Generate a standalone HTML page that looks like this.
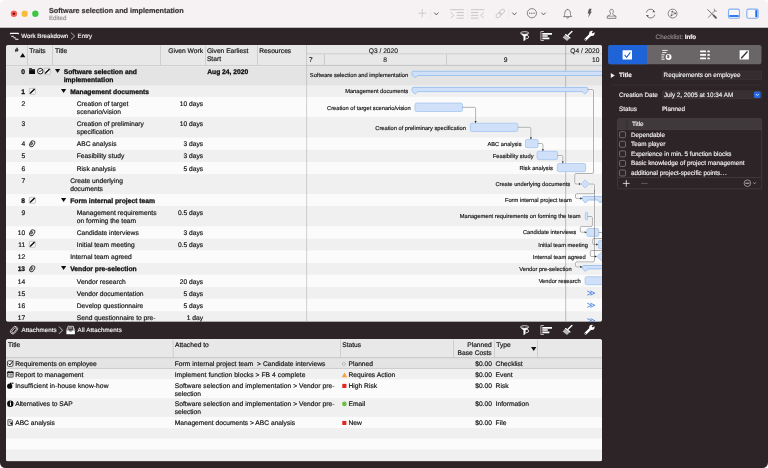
<!DOCTYPE html>
<html lang="en"><head><meta charset="utf-8"><title>Software selection and implementation</title>
<style>
html,body{margin:0;padding:0;background:#fff;}
body{width:768px;height:468px;overflow:hidden;position:relative;font-family:"Liberation Sans",sans-serif;}
#win{position:absolute;left:0;top:0;width:768px;height:468px;border-radius:5.5px;overflow:hidden;background:linear-gradient(#f6f1f3 0,#f6f1f3 27px,#2d2427 27px);will-change:transform;}
#win div{position:absolute;box-sizing:border-box;}
#win svg{position:absolute;overflow:visible;}
.t{font-size:6.68px;line-height:8px;color:#141414;white-space:nowrap;-webkit-text-stroke:0.18px;text-rendering:geometricPrecision;}
.b{font-weight:bold;font-size:6.72px;-webkit-text-stroke:0.26px;color:#0c0c0c;}
</style></head><body><div id="win">

<svg style="left:0;top:0" width="768" height="29" viewBox="0 0 768 29"><rect x="0" y="0" width="768" height="27.7" fill="#f6f1f3"/><rect x="0" y="26.5" width="768" height="1.3" fill="#fdfbfc"/><rect x="0" y="27.75" width="768" height="1.3" fill="#2d2427"/><circle cx="13.9" cy="13.8" r="3.75" fill="#fcfaff"/><circle cx="24.65" cy="13.8" r="3.75" fill="#fcfaff"/><circle cx="35.35" cy="13.8" r="3.75" fill="#fcfaff"/><circle cx="13.9" cy="13.8" r="3.2" fill="#f6605a"/><circle cx="24.65" cy="13.8" r="3.2" fill="#f7bc3a"/><circle cx="35.35" cy="13.8" r="3.2" fill="#3cc644"/><rect x="12.95" y="12.85" width="1.9" height="1.9" rx="0.4" fill="#5e0705"/></svg>
<div class="t" style="left:48.9px;top:6.1px;font-size:7.27px;line-height:9px;font-weight:bold;color:#383435;-webkit-text-stroke:0.2px;">Software selection and implementation</div>
<div class="t" style="left:48.9px;top:15.1px;font-size:6.2px;line-height:8px;color:#9a9597;-webkit-text-stroke:0.2px;">Edited</div>
<svg style="left:0;top:0" width="768" height="28" viewBox="0 0 768 28"><path d="M418.2 13.2H426.3M422.25 9.1V17.3" stroke="#cac5c7" stroke-width="0.85" fill="none"/><path d="M430.6 9V18.2M467.8 9V18.2M508.8 9V18.2" stroke="#e9e4e6" stroke-width="0.6"/><path d="M434.45 12.9L436.3 14.9L438.15 12.9" fill="none" stroke="#5d585a" stroke-width="0.95" stroke-linecap="round" stroke-linejoin="round"/><path d="M450 9.7H463.8M456.6 12.5H463.8M456.6 15.3H463.8M456.6 18.1H463.8" stroke="#cac5c7" stroke-width="1" fill="none"/><path d="M450.7 12.4L453.8 15.3L450.7 18.2" stroke="#cac5c7" stroke-width="1" fill="none"/><path d="M470.9 9.7H484.4M470.9 12.5H478.4M470.9 15.3H478.4M470.9 18.1H478.4" stroke="#cac5c7" stroke-width="1" fill="none"/><path d="M483.9 12.4L480.8 15.3L483.9 18.2" stroke="#cac5c7" stroke-width="1" fill="none"/><g transform="translate(500.3 13.5) rotate(-45)" stroke="#cac5c7" stroke-width="0.95" fill="none"><rect x="-5.3" y="-1.75" width="6" height="3.5" rx="1.75"/><rect x="-0.7" y="-1.75" width="6" height="3.5" rx="1.75"/></g><path d="M512.55 12.9L514.4 14.9L516.25 12.9" fill="none" stroke="#5d585a" stroke-width="0.95" stroke-linecap="round" stroke-linejoin="round"/><circle cx="531.9" cy="13.2" r="4.6" stroke="#5d585a" stroke-width="0.7" fill="none"/><g fill="#5d585a"><circle cx="529.7" cy="13.2" r="0.65"/><circle cx="531.9" cy="13.2" r="0.65"/><circle cx="534.1" cy="13.2" r="0.65"/></g><path d="M541.65 12.9L543.5 14.9L545.35 12.9" fill="none" stroke="#5d585a" stroke-width="0.95" stroke-linecap="round" stroke-linejoin="round"/><path d="M563.6 16.6C565 15.6 564.6 13.6 564.9 12.2C565.2 10.6 566.2 9.6 567.6 9.6C569 9.6 570 10.6 570.3 12.2C570.6 13.6 570.2 15.6 571.6 16.6Z" stroke="#5d585a" stroke-width="0.75" fill="none" stroke-linejoin="round"/><path d="M566.6 17.2A1 1 0 0 0 568.6 17.2" stroke="#5d585a" stroke-width="0.75" fill="none"/><path d="M567.6 9.6V8.9" stroke="#5d585a" stroke-width="0.75"/><path d="M589 8.8L591.7 8.8L590.5 11.6L591.8 11.6L588.1 17.7L589.2 13.5L587.6 13.5Z" fill="#5d585a"/><path d="M607.3 18.35V16.4C607.3 15.5 609.6 15.7 610.2 14.6C610.7 13.7 610.5 13.3 610.1 12.5C609.4 10.9 610.1 9.3 611.6 9.3C613.1 9.3 613.8 10.9 613.1 12.5C612.7 13.3 612.5 13.7 613 14.6C613.6 15.7 615.9 15.5 615.9 16.4V18.35Z" stroke="#5d585a" stroke-width="0.72" fill="none" stroke-linejoin="round"/><path d="M607.5 16.2H615.7" stroke="#5d585a" stroke-width="0.55"/><path d="M646.35 12.6A4.35 4.35 0 0 1 654.2 11.1" stroke="#5d585a" stroke-width="0.75" fill="none"/><path d="M654.85 14.6A4.35 4.35 0 0 1 647 16.1" stroke="#5d585a" stroke-width="0.75" fill="none"/><path d="M653.2 10L655.4 12.2L652.6 12.3ZM648 17.2L645.8 15L648.6 14.9Z" fill="#5d585a"/><circle cx="672.6" cy="13.6" r="4.45" stroke="#5d585a" stroke-width="0.7" fill="none"/><path d="M672.3 11.5L675.3 13.3L671.4 15.5Z" stroke="#5d585a" stroke-width="0.5" fill="none"/><g fill="#5d585a"><circle cx="672.3" cy="11.5" r="0.85"/><circle cx="675.3" cy="13.3" r="0.85"/><circle cx="671.4" cy="15.5" r="0.85"/></g><path d="M707.7 9.7L713.6 15.4" stroke="#5d585a" stroke-width="0.85" fill="none" stroke-linecap="round"/><path d="M713.6 15.4L716 17.8" stroke="#5d585a" stroke-width="1.9" stroke-linecap="round"/><path d="M714.9 10.6L708.3 17.5" stroke="#8a8587" stroke-width="1" fill="none" stroke-linecap="round"/><path d="M714.3 9.1L714.6 10.9L716.4 11.2" stroke="#8a8587" stroke-width="0.9" fill="none" stroke-linecap="round" stroke-linejoin="round"/><rect x="728.5" y="9.1" width="11" height="9.1" rx="1.8" stroke="#82b0f7" stroke-width="1.15" fill="#faf7f8"/><rect x="729.3" y="15.1" width="9.4" height="1.8" fill="#1b6cf1"/><rect x="746.8" y="9.1" width="11.3" height="9.1" rx="1.8" stroke="#82b0f7" stroke-width="1.15" fill="#faf7f8"/><rect x="755.3" y="10.1" width="1.9" height="7.1" fill="#1b6cf1"/><path d="M743 9.3V18" stroke="#ebe6e8" stroke-width="0.6"/></svg>
<svg style="left:0;top:28px" width="100" height="17" viewBox="0 28 100 17"><path d="M10.5 33.3H18.3" stroke="#fff" stroke-width="1.15" stroke-linecap="round"/><path d="M10.3 33.4V34.5M18.5 33.4V34.5" stroke="#fff" stroke-width="0.6"/><path d="M11.7 36.3H13.3M13.8 37.8H15.2M15.7 39.2H18" stroke="#fff" stroke-width="1.05" stroke-linecap="round"/><path d="M13.3 36.6L14.2 37.5M15.2 38.1L16 38.9" stroke="#d8d5d6" stroke-width="0.5" fill="none"/><path d="M70.9 32.6L74.7 36.1L70.9 39.6" stroke="#d5d2d3" stroke-width="0.75" fill="none"/></svg><div class="t" style="left:21.3px;top:33.1px;font-size:6.2px;line-height:8px;color:#f4f2f3;-webkit-text-stroke:0.15px;">Work Breakdown</div><div class="t" style="left:77.6px;top:33.1px;font-size:6.2px;line-height:8px;color:#f4f2f3;-webkit-text-stroke:0.15px;">Entry</div>
<svg style="left:515px;top:28px" width="85" height="16" viewBox="515 28 85 16"><ellipse cx="524.6" cy="33.05" rx="4.1" ry="1.4" fill="none" stroke="#fff" stroke-width="0.75"/><path d="M521.2 33.8L523.7 36.5V40.7L525.3 40V36.5L528 33.8Q524.6 35 521.2 33.8Z" fill="#fff" stroke="#fff" stroke-width="0.4" stroke-linejoin="round"/><path d="M525.6 35.4H527A1.6 1.6 0 0 1 527 38.6H525.8" fill="none" stroke="#fff" stroke-width="0.75"/><path d="M543.9 31.5H540.9V40.5H543.9" fill="none" stroke="#e9e6e7" stroke-width="0.75"/><path d="M542.3 33.8H552M542.3 36H547.7M542.3 38.45H549.4" stroke="#fff" stroke-width="1.7"/><path d="M564.9 35.1L569.4 38.6L567.1 40.9L562.6 37.4Z" fill="#bdb9ba"/><path d="M571.9 31.4L568 35.3" stroke="#fff" stroke-width="1.35" stroke-linecap="round"/><path d="M565.6 34.6L569.9 37.9" stroke="#fff" stroke-width="1.3" stroke-linecap="round"/><path d="M585.7 39.4L590.8 34.3" stroke="#fff" stroke-width="2.5" stroke-linecap="round"/><circle cx="591.9" cy="33.3" r="2.65" fill="#fff"/><path d="M592.2 33L595.4 29.8" stroke="#2d2427" stroke-width="1.7"/><circle cx="585.6" cy="39.5" r="0.55" fill="#2d2427"/></svg>
<div style="left:6px;top:44px;width:596px;height:278px;overflow:hidden;">
<svg style="left:0;top:0" width="596" height="278" viewBox="6 44 596 278"><defs><clipPath id="ct"><rect x="6" y="44.9" width="596" height="276.7" rx="2.6"/></clipPath></defs><g clip-path="url(#ct)"><rect x="6" y="44.9" width="596" height="276.7" fill="#fbfbfb"/><rect x="6" y="65.8" width="596" height="19.95" fill="#e4e4e4"/><rect x="6" y="85.7" width="596" height="11.25" fill="#f0f0f0"/><rect x="6" y="96.9" width="596" height="20.25" fill="#fbfbfb"/><rect x="6" y="117.1" width="596" height="20.7" fill="#f0f0f0"/><rect x="6" y="137.75" width="596" height="12.1" fill="#fbfbfb"/><rect x="6" y="149.8" width="596" height="12.25" fill="#f0f0f0"/><rect x="6" y="162" width="596" height="12.05" fill="#fbfbfb"/><rect x="6" y="174" width="596" height="20.05" fill="#f0f0f0"/><rect x="6" y="194" width="596" height="12.05" fill="#fbfbfb"/><rect x="6" y="206" width="596" height="20.55" fill="#f0f0f0"/><rect x="6" y="226.5" width="596" height="12.25" fill="#fbfbfb"/><rect x="6" y="238.7" width="596" height="11.95" fill="#f0f0f0"/><rect x="6" y="250.6" width="596" height="12.45" fill="#fbfbfb"/><rect x="6" y="263" width="596" height="11.85" fill="#f0f0f0"/><rect x="6" y="274.8" width="596" height="12.15" fill="#fbfbfb"/><rect x="6" y="286.9" width="596" height="11.95" fill="#f0f0f0"/><rect x="6" y="298.8" width="596" height="12.45" fill="#fbfbfb"/><rect x="6" y="311.2" width="596" height="20.45" fill="#f0f0f0"/><rect x="6" y="44.9" width="596" height="20.1" fill="#e8e8e8"/><rect x="6" y="65" width="596" height="0.8" fill="#bcbcbc"/><rect x="6" y="65.8" width="300.6" height="0.8" fill="#ededed"/><rect x="26.95" y="45.5" width="0.7" height="19.5" fill="#c4c4c4"/><rect x="52.05" y="45.5" width="0.7" height="19.5" fill="#c4c4c4"/><rect x="160.05" y="45.5" width="0.7" height="19.5" fill="#c4c4c4"/><rect x="205.05" y="45.5" width="0.7" height="19.5" fill="#c4c4c4"/><rect x="257.15" y="45.5" width="0.7" height="19.5" fill="#c4c4c4"/></g></svg>
<div class="t b" style="right:576.9px;top:25.1px;text-align:right;">0</div>
<div class="t b" style="left:57.7px;top:25.1px;">Software selection and<br>implementation</div>
<svg style="left:48.85px;top:25.25px" width="5.2" height="4" viewBox="0 0 5.2 4"><path d="M0 0H5.2L2.6 4Z" fill="#0c0c0c"/></svg>
<div class="t b" style="left:201.2px;top:25.1px;">Aug 24, 2020</div>
<svg style="left:23.1px;top:23.7px" width="6.6" height="6.6" viewBox="0 0 6.6 6.6"><path d="M0.1 0.3H2.7L3.3 1H6V6H0.1Z" fill="#0c0c0c"/><path d="M0.1 1.75H6" stroke="#d9d9d9" stroke-width="0.3"/></svg>
<svg style="left:30.7px;top:23.7px" width="6.6" height="6.6" viewBox="0 0 6.6 6.6"><circle cx="3.3" cy="3.2" r="2.75" fill="#fafafa" stroke="#141414" stroke-width="1"/><path d="M3.2 3.4L4.8 2.2M3.2 3.4H2.2" stroke="#141414" stroke-width="0.95" fill="none"/></svg>
<svg style="left:38.3px;top:23.7px" width="6.8" height="6.6" viewBox="0 0 6.8 6.6"><rect x="0.35" y="0.35" width="6" height="5.9" rx="0.6" fill="#fafafa" stroke="#a3a3a3" stroke-width="0.6"/><path d="M1.5 5.1L5.6 0.9" stroke="#0c0c0c" stroke-width="1.45" stroke-linecap="butt"/><path d="M0.7 5.9L1 4.5L2.1 5.6Z" fill="#0c0c0c"/></svg>
<div class="t b" style="right:576.9px;top:45.1px;text-align:right;">1</div>
<div class="t b" style="left:64.2px;top:45.1px;">Management documents</div>
<svg style="left:55.35px;top:45.25px" width="5.2" height="4" viewBox="0 0 5.2 4"><path d="M0 0H5.2L2.6 4Z" fill="#0c0c0c"/></svg>
<svg style="left:23.1px;top:43.7px" width="6.8" height="6.6" viewBox="0 0 6.8 6.6"><rect x="0.35" y="0.35" width="6" height="5.9" rx="0.6" fill="#fafafa" stroke="#a3a3a3" stroke-width="0.6"/><path d="M1.5 5.1L5.6 0.9" stroke="#0c0c0c" stroke-width="1.45" stroke-linecap="butt"/><path d="M0.7 5.9L1 4.5L2.1 5.6Z" fill="#0c0c0c"/></svg>
<div class="t" style="right:576.9px;top:57.1px;text-align:right;">2</div>
<div class="t" style="left:70.8px;top:57.1px;">Creation of target<br>scenario/vision</div>
<div class="t" style="right:398.9px;top:57.1px;text-align:right;">10 days</div>
<div class="t" style="right:576.9px;top:77.1px;text-align:right;">3</div>
<div class="t" style="left:70.8px;top:77.1px;">Creation of preliminary<br>specification</div>
<div class="t" style="right:398.9px;top:77.1px;text-align:right;">10 days</div>
<div class="t" style="right:576.9px;top:97.1px;text-align:right;">4</div>
<div class="t" style="left:70.8px;top:97.1px;">ABC analysis</div>
<div class="t" style="right:398.9px;top:97.1px;text-align:right;">3 days</div>
<svg style="left:23.1px;top:95.7px" width="6.8" height="7.2" viewBox="0 0 6.8 7.2"><g transform="translate(3.2 3.7) rotate(35)" fill="none" stroke="#4a4a4a" stroke-width="1"><rect x="-2" y="-3.1" width="4" height="6.2" rx="2"/><path d="M0.2 -1.2V1.2A0.9 0.9 0 0 1 -1.1 1.2V-1.6"/></g></svg>
<div class="t" style="right:576.9px;top:109.1px;text-align:right;">5</div>
<div class="t" style="left:70.8px;top:109.1px;">Feasibility study</div>
<div class="t" style="right:398.9px;top:109.1px;text-align:right;">3 days</div>
<div class="t" style="right:576.9px;top:122.1px;text-align:right;">6</div>
<div class="t" style="left:70.8px;top:122.1px;">Risk analysis</div>
<div class="t" style="right:398.9px;top:122.1px;text-align:right;">5 days</div>
<div class="t" style="right:576.9px;top:134.1px;text-align:right;">7</div>
<div class="t" style="left:64.2px;top:134.1px;">Create underlying<br>documents</div>
<div class="t b" style="right:576.9px;top:154.1px;text-align:right;">8</div>
<div class="t b" style="left:64.2px;top:154.1px;">Form internal project team</div>
<svg style="left:55.35px;top:154.25px" width="5.2" height="4" viewBox="0 0 5.2 4"><path d="M0 0H5.2L2.6 4Z" fill="#0c0c0c"/></svg>
<svg style="left:23.1px;top:152.7px" width="6.8" height="6.6" viewBox="0 0 6.8 6.6"><rect x="0.35" y="0.35" width="6" height="5.9" rx="0.6" fill="#fafafa" stroke="#a3a3a3" stroke-width="0.6"/><path d="M1.5 5.1L5.6 0.9" stroke="#0c0c0c" stroke-width="1.45" stroke-linecap="butt"/><path d="M0.7 5.9L1 4.5L2.1 5.6Z" fill="#0c0c0c"/></svg>
<div class="t" style="right:576.9px;top:166.1px;text-align:right;">9</div>
<div class="t" style="left:70.8px;top:166.1px;">Management requirements<br>on forming the team</div>
<div class="t" style="right:398.9px;top:166.1px;text-align:right;">0.5 days</div>
<div class="t" style="right:576.9px;top:186.1px;text-align:right;">10</div>
<div class="t" style="left:70.8px;top:186.1px;">Candidate interviews</div>
<div class="t" style="right:398.9px;top:186.1px;text-align:right;">3 days</div>
<svg style="left:23.1px;top:184.7px" width="6.8" height="7.2" viewBox="0 0 6.8 7.2"><g transform="translate(3.2 3.7) rotate(35)" fill="none" stroke="#4a4a4a" stroke-width="1"><rect x="-2" y="-3.1" width="4" height="6.2" rx="2"/><path d="M0.2 -1.2V1.2A0.9 0.9 0 0 1 -1.1 1.2V-1.6"/></g></svg>
<div class="t" style="right:576.9px;top:198.1px;text-align:right;">11</div>
<div class="t" style="left:70.8px;top:198.1px;">Initial team meeting</div>
<div class="t" style="right:398.9px;top:198.1px;text-align:right;">0.5 days</div>
<svg style="left:23.1px;top:196.7px" width="6.8" height="6.6" viewBox="0 0 6.8 6.6"><rect x="0.35" y="0.35" width="6" height="5.9" rx="0.6" fill="#fafafa" stroke="#a3a3a3" stroke-width="0.6"/><path d="M1.5 5.1L5.6 0.9" stroke="#0c0c0c" stroke-width="1.45" stroke-linecap="butt"/><path d="M0.7 5.9L1 4.5L2.1 5.6Z" fill="#0c0c0c"/></svg>
<div class="t" style="right:576.9px;top:210.1px;text-align:right;">12</div>
<div class="t" style="left:64.2px;top:210.1px;">Internal team agreed</div>
<div class="t b" style="right:576.9px;top:222.1px;text-align:right;">13</div>
<div class="t b" style="left:64.2px;top:222.1px;">Vendor pre-selection</div>
<svg style="left:55.35px;top:222.25px" width="5.2" height="4" viewBox="0 0 5.2 4"><path d="M0 0H5.2L2.6 4Z" fill="#0c0c0c"/></svg>
<svg style="left:23.1px;top:220.7px" width="6.8" height="7.2" viewBox="0 0 6.8 7.2"><g transform="translate(3.2 3.7) rotate(35)" fill="none" stroke="#4a4a4a" stroke-width="1"><rect x="-2" y="-3.1" width="4" height="6.2" rx="2"/><path d="M0.2 -1.2V1.2A0.9 0.9 0 0 1 -1.1 1.2V-1.6"/></g></svg>
<div class="t" style="right:576.9px;top:235.1px;text-align:right;">14</div>
<div class="t" style="left:70.8px;top:235.1px;">Vendor research</div>
<div class="t" style="right:398.9px;top:235.1px;text-align:right;">20 days</div>
<div class="t" style="right:576.9px;top:247.1px;text-align:right;">15</div>
<div class="t" style="left:70.8px;top:247.1px;">Vendor documentation</div>
<div class="t" style="right:398.9px;top:247.1px;text-align:right;">5 days</div>
<div class="t" style="right:576.9px;top:259.1px;text-align:right;">16</div>
<div class="t" style="left:70.8px;top:259.1px;">Develop questionnaire</div>
<div class="t" style="right:398.9px;top:259.1px;text-align:right;">5 days</div>
<div class="t" style="right:576.9px;top:271.1px;text-align:right;">17</div>
<div class="t" style="left:70.8px;top:271.1px;">Send questionnaire to pre-<br>selected vendors</div>
<div class="t" style="right:398.9px;top:271.1px;text-align:right;">1 day</div>
<div class="t" style="left:8.9px;top:3.1px;font-size:6px;font-weight:bold;">#</div>
<svg style="left:13.9px;top:9.2px" width="5.4" height="4.3" viewBox="0 0 5.4 4.3"><path d="M0 4.3H5.4L2.7 0Z" fill="#0c0c0c"/></svg>
<div class="t" style="left:23.2px;top:4.1px;">Traits</div>
<div class="t" style="left:48.9px;top:4.1px;">Title</div>
<div class="t" style="right:399px;top:4.1px;text-align:right;">Given Work</div>
<div class="t" style="left:200.9px;top:4.1px;">Given Earliest<br>Start</div>
<div class="t" style="left:253.3px;top:4.1px;">Resources</div>
<svg style="left:0;top:0" width="596" height="278" viewBox="6 44 596 278" font-family="Liberation Sans, sans-serif" text-rendering="geometricPrecision"><g clip-path="url(#ct)"><rect x="306.6" y="44.9" width="295.4" height="20.9" fill="#e8e8e8"/><path d="M306.6 53.8H602" stroke="#c4c4c4" stroke-width="0.7"/><path d="M306.6 65.4H602" stroke="#bdbdbd" stroke-width="0.8"/><path d="M324.4 54.2V65M446.5 54.2V65" stroke="#bdbdbd" stroke-width="0.7"/><path d="M306.6 44.9V321.6" stroke="#bcbcbc" stroke-width="0.7"/><path d="M565.7 44.9V321.6" stroke="#9c9c9c" stroke-width="0.65"/><g font-size="6.68" fill="#141414" stroke="#141414" stroke-width="0.12"><text x="368.7" y="52.87">Q3 / 2020</text><text x="599.5" y="52.87" text-anchor="end">Q4 / 2020</text><text x="309" y="62.37">7</text><text x="385.2" y="62.37" text-anchor="middle">8</text><text x="505.6" y="62.37" text-anchor="middle">9</text><text x="599.5" y="62.37" text-anchor="end">10</text></g><g font-size="5.72" fill="#141414" stroke="#141414" stroke-width="0.16" text-anchor="end"><text x="408.1" y="77.05">Software selection and implementation</text><text x="408.1" y="93.05">Management documents</text><text x="410.7" y="109.85">Creation of target scenario/vision</text><text x="465.9" y="129.55">Creation of preliminary specification</text><text x="521.5" y="145.75">ABC analysis</text><text x="533.5" y="157.65">Feasibility study</text><text x="552.8" y="169.75">Risk analysis</text><text x="570.1" y="186.05">Create underlying documents</text><text x="571.7" y="202.05">Form internal project team</text><text x="580.6" y="218.35">Management requirements on forming the team</text><text x="576" y="234.35">Candidate interviews</text><text x="587.9" y="246.65">Initial team meeting</text><text x="585.6" y="258.85">Internal team agreed</text><text x="571.7" y="271.25">Vendor pre-selection</text><text x="580.6" y="283.05">Vendor research</text></g><path d="M462.5 107.3L474.3 107.3Q475.6 107.3 475.6 108.6L475.6 121.2" fill="none" stroke="#fff" stroke-opacity="0.85" stroke-width="1.7"/><path d="M517.9 127.3L529.6 127.3Q530.9 127.3 530.9 128.6L530.9 137.4" fill="none" stroke="#fff" stroke-opacity="0.85" stroke-width="1.7"/><path d="M538.1 143.5L541.6 143.5Q542.9 143.5 542.9 144.8L542.9 149.3" fill="none" stroke="#fff" stroke-opacity="0.85" stroke-width="1.7"/><path d="M557.5 155.5L561.5 155.5Q562.8 155.5 562.8 156.8L562.8 161.5" fill="none" stroke="#fff" stroke-opacity="0.85" stroke-width="1.7"/><path d="M587.8 89.5L592.2 89.5Q593.5 89.5 593.5 90.8L593.5 172.2Q593.5 173.5 592.2 173.5L576.1 173.5Q574.8 173.5 574.8 174.8L574.8 182.7Q574.8 184 576.1 184L579 184" fill="none" stroke="#fff" stroke-opacity="0.85" stroke-width="1.7"/><path d="M589.2 184L593.2 184Q594.5 184 594.5 185.3L594.5 192.4Q594.5 193.7 593.2 193.7L576.8 193.7Q575.5 193.7 575.5 195L575.5 197.1Q575.5 198.4 576.8 198.4L580.3 198.4" fill="none" stroke="#fff" stroke-opacity="0.85" stroke-width="1.7"/><path d="M594.5 190L594.5 260.6Q594.5 261.9 593.2 261.9L576.8 261.9Q575.5 261.9 575.5 263.2L575.5 265.6Q575.5 266.9 576.8 266.9L580.3 266.9" fill="none" stroke="#fff" stroke-opacity="0.85" stroke-width="1.7"/><path d="M587.7 216.5L591.1 216.5Q592.4 216.5 592.4 217.8L592.4 225.1Q592.4 226.4 591.1 226.4L581.6 226.4Q580.3 226.4 580.3 227.7L580.3 230.9Q580.3 232.2 581.6 232.2L584.8 232.2" fill="none" stroke="#fff" stroke-opacity="0.85" stroke-width="1.7"/><path d="M598.8 232.5L602.7 232.5Q604 232.5 604 233.8L604 237.2Q604 238.5 602.7 238.5L594 238.5Q592.7 238.5 592.7 239.8L592.7 243.2Q592.7 244.5 594 244.5L596.2 244.5" fill="none" stroke="#fff" stroke-opacity="0.85" stroke-width="1.7"/><path d="M603 244.5L604.7 244.5Q606 244.5 606 245.8L606 249.2Q606 250.5 604.7 250.5L591.6 250.5Q590.3 250.5 590.3 251.8L590.3 255.2Q590.3 256.5 591.6 256.5L595 256.5" fill="none" stroke="#fff" stroke-opacity="0.85" stroke-width="1.7"/><path d="M413.3 71.3H608.8Q610 71.3 610 72.5V75.5H417.7L415.1 77.6L412.1 75.2V72.5Q412.1 71.3 413.3 71.3Z" fill="#cfe0f8" stroke="#94bdef" stroke-width="0.85" stroke-linejoin="round"/><path d="M413.3 87.4H586.6Q587.8 87.4 587.8 88.6V91.3L584.8 94L582.2 91.6H417.7L415.1 94L412.1 91.3V88.6Q412.1 87.4 413.3 87.4Z" fill="#cfe0f8" stroke="#94bdef" stroke-width="0.85" stroke-linejoin="round"/><path d="M583.6 196.4H602Q603.2 196.4 603.2 197.6V199.7L600.2 203L597.6 200H588L585.4 203L582.4 199.7V197.6Q582.4 196.4 583.6 196.4Z" fill="#cfe0f8" stroke="#94bdef" stroke-width="0.85" stroke-linejoin="round"/><path d="M583.6 265.5H618.8Q620 265.5 620 266.7V268.9H588L585.4 271.5L582.4 268.6V266.7Q582.4 265.5 583.6 265.5Z" fill="#cfe0f8" stroke="#94bdef" stroke-width="0.85" stroke-linejoin="round"/><rect x="415" y="103.1" width="47.5" height="8.4" rx="1.6" fill="#cfe0f8" stroke="#9cc2ef" stroke-width="0.7"/><rect x="470.4" y="123.2" width="47.5" height="8.3" rx="1.6" fill="#cfe0f8" stroke="#9cc2ef" stroke-width="0.7"/><rect x="525.4" y="139.4" width="12.7" height="8.3" rx="1.6" fill="#cfe0f8" stroke="#9cc2ef" stroke-width="0.7"/><rect x="537.1" y="151.3" width="20.4" height="8.3" rx="1.6" fill="#cfe0f8" stroke="#9cc2ef" stroke-width="0.7"/><rect x="557.3" y="163.5" width="28.3" height="8.2" rx="1.6" fill="#cfe0f8" stroke="#9cc2ef" stroke-width="0.7"/><rect x="585.3" y="212.1" width="2.4" height="7.9" rx="1.6" fill="#cfe0f8" stroke="#9cc2ef" stroke-width="0.7"/><rect x="586.9" y="228.5" width="11.9" height="7.9" rx="1.6" fill="#cfe0f8" stroke="#9cc2ef" stroke-width="0.7"/><rect x="598.3" y="240.7" width="7.7" height="7.8" rx="1.6" fill="#cfe0f8" stroke="#9cc2ef" stroke-width="0.7"/><rect x="585.1" y="276.7" width="34.9" height="8" rx="1.6" fill="#cfe0f8" stroke="#9cc2ef" stroke-width="0.7"/><path d="M462.5 107.3L474.3 107.3Q475.6 107.3 475.6 108.6L475.6 121.2" fill="none" stroke="#585858" stroke-width="0.48"/><path d="M474.55 121.1H476.65L475.6 123.2Z" fill="#222"/><path d="M517.9 127.3L529.6 127.3Q530.9 127.3 530.9 128.6L530.9 137.4" fill="none" stroke="#585858" stroke-width="0.48"/><path d="M529.85 137.3H531.95L530.9 139.4Z" fill="#222"/><path d="M538.1 143.5L541.6 143.5Q542.9 143.5 542.9 144.8L542.9 149.3" fill="none" stroke="#585858" stroke-width="0.48"/><path d="M541.85 149.2H543.95L542.9 151.3Z" fill="#222"/><path d="M557.5 155.5L561.5 155.5Q562.8 155.5 562.8 156.8L562.8 161.5" fill="none" stroke="#585858" stroke-width="0.48"/><path d="M561.75 161.4H563.85L562.8 163.5Z" fill="#222"/><path d="M587.8 89.5L592.2 89.5Q593.5 89.5 593.5 90.8L593.5 172.2Q593.5 173.5 592.2 173.5L576.1 173.5Q574.8 173.5 574.8 174.8L574.8 182.7Q574.8 184 576.1 184L579 184" fill="none" stroke="#585858" stroke-width="0.48"/><path d="M578.9 182.95V185.05L581 184Z" fill="#222"/><path d="M589.2 184L593.2 184Q594.5 184 594.5 185.3L594.5 192.4Q594.5 193.7 593.2 193.7L576.8 193.7Q575.5 193.7 575.5 195L575.5 197.1Q575.5 198.4 576.8 198.4L580.3 198.4" fill="none" stroke="#585858" stroke-width="0.48"/><path d="M580.2 197.35V199.45L582.3 198.4Z" fill="#222"/><path d="M594.5 190L594.5 260.6Q594.5 261.9 593.2 261.9L576.8 261.9Q575.5 261.9 575.5 263.2L575.5 265.6Q575.5 266.9 576.8 266.9L580.3 266.9" fill="none" stroke="#585858" stroke-width="0.48"/><path d="M580.2 265.85V267.95L582.3 266.9Z" fill="#222"/><path d="M587.7 216.5L591.1 216.5Q592.4 216.5 592.4 217.8L592.4 225.1Q592.4 226.4 591.1 226.4L581.6 226.4Q580.3 226.4 580.3 227.7L580.3 230.9Q580.3 232.2 581.6 232.2L584.8 232.2" fill="none" stroke="#585858" stroke-width="0.48"/><path d="M584.7 231.15V233.25L586.8 232.2Z" fill="#222"/><path d="M598.8 232.5L602.7 232.5Q604 232.5 604 233.8L604 237.2Q604 238.5 602.7 238.5L594 238.5Q592.7 238.5 592.7 239.8L592.7 243.2Q592.7 244.5 594 244.5L596.2 244.5" fill="none" stroke="#585858" stroke-width="0.48"/><path d="M596.1 243.45V245.55L598.2 244.5Z" fill="#222"/><path d="M603 244.5L604.7 244.5Q606 244.5 606 245.8L606 249.2Q606 250.5 604.7 250.5L591.6 250.5Q590.3 250.5 590.3 251.8L590.3 255.2Q590.3 256.5 591.6 256.5L595 256.5" fill="none" stroke="#585858" stroke-width="0.48"/><path d="M594.9 255.45V257.55L597 256.5Z" fill="#222"/><path d="M581 183.9L585.1 179.8L589.2 183.9L585.1 188Z" fill="#cfe0f8" stroke="#9cc2ef" stroke-width="0.7"/><path d="M597.1 256.5L602 251.6L606.9 256.5L602 261.4Z" fill="#cfe0f8" stroke="#9cc2ef" stroke-width="0.7"/><path d="M587.2 291L591.6 293.1L587.2 295.2M590.4 291L594.8 293.1L590.4 295.2" fill="none" stroke="#2a6fe0" stroke-width="0.75"/><path d="M587.2 303.15L591.6 305.25L587.2 307.35M590.4 303.15L594.8 305.25L590.4 307.35" fill="none" stroke="#2a6fe0" stroke-width="0.75"/><path d="M587.2 318.6L591.6 320.7L587.2 322.8M590.4 318.6L594.8 320.7L590.4 322.8" fill="none" stroke="#2a6fe0" stroke-width="0.75"/></g></svg>
</div>
<svg style="left:0;top:322px" width="130" height="17" viewBox="0 322 130 17"><g transform="translate(14 330.2) rotate(40)" fill="none" stroke="#e8e5e6" stroke-width="0.75"><rect x="-2.4" y="-4.2" width="4.8" height="8.4" rx="2.4"/><rect x="-1" y="-3" width="2.4" height="6" rx="1.2"/></g><path d="M59 326.6L62.5 330.2L59 333.8" stroke="#e2dfe0" stroke-width="0.85" fill="none"/><path d="M67.9 326.3H73.4V331H67.9Z" fill="none" stroke="#fff" stroke-width="0.7"/><path d="M69 327.6H72.3M69 328.8H72.3" stroke="#fff" stroke-width="0.5"/><path d="M66.4 330.4H68.6L69.4 331.6H71.9L72.7 330.4H74.9V334.3H66.4Z" fill="#fff"/><path d="M67.6 327.6L66.4 330.6M73.7 327.6L74.9 330.6" stroke="#fff" stroke-width="0.6"/></svg><div class="t" style="left:21.5px;top:327.1px;font-size:6.2px;line-height:8px;color:#f4f2f3;-webkit-text-stroke:0.15px;letter-spacing:0.08px;">Attachments</div><div class="t" style="left:77.6px;top:327.1px;font-size:6.2px;line-height:8px;color:#f4f2f3;-webkit-text-stroke:0.15px;letter-spacing:0.11px;">All Attachments</div>
<svg style="left:515px;top:321.6px" width="85" height="16" viewBox="515 321.6 85 16"><ellipse cx="524.6" cy="326.65" rx="4.1" ry="1.4" fill="none" stroke="#fff" stroke-width="0.75"/><path d="M521.2 327.4L523.7 330.1V334.3L525.3 333.6V330.1L528 327.4Q524.6 328.6 521.2 327.4Z" fill="#fff" stroke="#fff" stroke-width="0.4" stroke-linejoin="round"/><path d="M525.6 329H527A1.6 1.6 0 0 1 527 332.2H525.8" fill="none" stroke="#fff" stroke-width="0.75"/><path d="M543.9 325.1H540.9V334.1H543.9" fill="none" stroke="#e9e6e7" stroke-width="0.75"/><path d="M542.3 327.4H552M542.3 329.6H547.7M542.3 332.05H549.4" stroke="#fff" stroke-width="1.7"/><path d="M564.9 328.7L569.4 332.2L567.1 334.5L562.6 331Z" fill="#bdb9ba"/><path d="M571.9 325L568 328.9" stroke="#fff" stroke-width="1.35" stroke-linecap="round"/><path d="M565.6 328.2L569.9 331.5" stroke="#fff" stroke-width="1.3" stroke-linecap="round"/><path d="M585.7 333L590.8 327.9" stroke="#fff" stroke-width="2.5" stroke-linecap="round"/><circle cx="591.9" cy="326.9" r="2.65" fill="#fff"/><path d="M592.2 326.6L595.4 323.4" stroke="#2d2427" stroke-width="1.7"/><circle cx="585.6" cy="333.1" r="0.55" fill="#2d2427"/></svg>
<div style="left:6px;top:338px;width:596px;height:124px;overflow:hidden;">
<svg style="left:0;top:0" width="596" height="124" viewBox="6 338 596 124"><defs><clipPath id="cb"><rect x="6" y="338.9" width="596" height="122.4" rx="2.6"/></clipPath></defs><g clip-path="url(#cb)"><rect x="6" y="338.9" width="596" height="122.4" fill="#fbfbfb"/><rect x="6" y="358.1" width="596" height="10.7" fill="#e4e4e4"/><rect x="6" y="368.75" width="596" height="10.7" fill="#f0f0f0"/><rect x="6" y="379.4" width="596" height="18.75" fill="#fbfbfb"/><rect x="6" y="398.1" width="596" height="18.85" fill="#f0f0f0"/><rect x="6" y="416.9" width="596" height="11.25" fill="#fbfbfb"/><rect x="6" y="428.1" width="596" height="10.55" fill="#f0f0f0"/><rect x="6" y="438.6" width="596" height="10.75" fill="#fbfbfb"/><rect x="6" y="449.3" width="596" height="12.05" fill="#f0f0f0"/><rect x="6" y="367.95" width="596" height="0.75" fill="#c2c2c2"/><rect x="6" y="338.9" width="596" height="18.5" fill="#e8e8e8"/><rect x="6" y="357.35" width="596" height="0.8" fill="#b7b7b7"/><rect x="172.75" y="339.5" width="0.7" height="17.9" fill="#c4c4c4"/><rect x="340.05" y="339.5" width="0.7" height="17.9" fill="#c4c4c4"/><rect x="453.05" y="339.5" width="0.7" height="17.9" fill="#c4c4c4"/><rect x="494.05" y="339.5" width="0.7" height="17.9" fill="#c4c4c4"/><rect x="537.15" y="339.5" width="0.7" height="17.9" fill="#c4c4c4"/></g></svg>
<svg style="left:1.4px;top:22.1px" width="7" height="7" viewBox="0 0 7 7"><rect x="0.45" y="0.85" width="5.5" height="5.5" rx="1.1" fill="#f0f0f0" stroke="#2a2a2a" stroke-width="0.8"/><path d="M1.6 3.5L2.9 5L6.3 0.7" fill="none" stroke="#161616" stroke-width="0.95"/></svg>
<div class="t" style="left:9.2px;top:23.1px;">Requirements on employee</div>
<div class="t" style="left:168.7px;top:23.1px;"><span style="letter-spacing:0.03px">Form internal project team &nbsp;&gt; Candidate interviews</span></div>
<svg style="left:336.2px;top:21.7px" width="5.4" height="7.9" viewBox="0 0 5.4 7.9"><circle cx="1.9" cy="3.9" r="1.45" fill="#f2f2f2" stroke="#8a8a8a" stroke-width="0.55"/></svg>
<div class="t" style="left:342.5px;top:23.1px;">Planned</div>
<div class="t" style="right:110.1px;top:23.1px;text-align:right;">$0.00</div>
<div class="t" style="left:489.6px;top:23.1px;">Checklist</div>
<svg style="left:1.4px;top:33.1px" width="7" height="7" viewBox="0 0 7 7"><rect x="0.45" y="1" width="5.7" height="5.1" rx="0.4" fill="#f2f2f2" stroke="#2a2a2a" stroke-width="0.75"/><path d="M0.1 1.5H6.5" stroke="#1c1c1c" stroke-width="1.5"/><path d="M1.7 0.1V1.4M4.9 0.1V1.4" stroke="#1c1c1c" stroke-width="0.8"/><path d="M1.3 3.5H5.3M1.3 4.9H5.3" stroke="#3c3c3c" stroke-width="0.75" stroke-dasharray="1 0.5"/></svg>
<div class="t" style="left:9.2px;top:34.1px;">Report to management</div>
<div class="t" style="left:168.7px;top:34.1px;"><span style="letter-spacing:0.073px">Implement function blocks &gt; FB 4 complete</span></div>
<svg style="left:336.2px;top:32.7px" width="5.4" height="7.9" viewBox="0 0 5.4 7.9"><path d="M-0.2 6.2L2.5 1.5L5.2 6.2Z" fill="#f5a242"/></svg>
<div class="t" style="left:342.5px;top:34.1px;">Requires Action</div>
<div class="t" style="right:110.1px;top:34.1px;text-align:right;">$0.00</div>
<div class="t" style="left:489.6px;top:34.1px;">Event</div>
<svg style="left:1.4px;top:44.1px" width="7" height="7" viewBox="0 0 7 7"><circle cx="2.7" cy="4.2" r="2.6" fill="#0c0c0c"/><rect x="2.9" y="0.7" width="1.7" height="1.6" fill="#0c0c0c"/><circle cx="5.8" cy="1.2" r="0.75" fill="#0c0c0c"/></svg>
<div class="t" style="left:9.2px;top:45.1px;"><span style="letter-spacing:0.075px">Insufficient in-house know-how</span></div>
<div class="t" style="left:168.7px;top:45.1px;"><span style="letter-spacing:0.053px">Software selection and implementation &gt; Vendor pre-</span><br>selection</div>
<svg style="left:336.2px;top:43.7px" width="5.4" height="7.9" viewBox="0 0 5.4 7.9"><rect x="0.3" y="1.9" width="4.1" height="4.1" fill="#e5261d"/></svg>
<div class="t" style="left:342.5px;top:45.1px;">High Risk</div>
<div class="t" style="right:110.1px;top:45.1px;text-align:right;">$0.00</div>
<div class="t" style="left:489.6px;top:45.1px;">Risk</div>
<svg style="left:1.4px;top:62.1px" width="7" height="7" viewBox="0 0 7 7"><circle cx="3.3" cy="3.7" r="3.2" fill="#0c0c0c"/><path d="M3.5 3V5.6" stroke="#fff" stroke-width="1"/><path d="M2.8 3.1H3.6M2.8 5.5H4.2" stroke="#fff" stroke-width="0.4"/><circle cx="3.5" cy="1.9" r="0.6" fill="#fff"/></svg>
<div class="t" style="left:9.2px;top:63.1px;">Alternatives to SAP</div>
<div class="t" style="left:168.7px;top:63.1px;"><span style="letter-spacing:0.053px">Software selection and implementation &gt; Vendor pre-</span><br>selection</div>
<svg style="left:336.2px;top:61.7px" width="5.4" height="7.9" viewBox="0 0 5.4 7.9"><circle cx="2.4" cy="3.9" r="2.35" fill="#6dbf3f"/></svg>
<div class="t" style="left:342.5px;top:63.1px;">Email</div>
<div class="t" style="right:110.1px;top:63.1px;text-align:right;">$0.00</div>
<div class="t" style="left:489.6px;top:63.1px;">Information</div>
<svg style="left:1.4px;top:81.1px" width="7" height="7" viewBox="0 0 7 7"><path d="M0.9 0.7H4.4L5.5 1.8V6.4H0.9Z" fill="#ededed" stroke="#2a2a2a" stroke-width="0.7"/><path d="M2 2.2H4.3V3.4H2Z" fill="#7a7a7a"/><path d="M2.9 4.6L5.2 3.1V5.9Z" fill="#0c0c0c"/></svg>
<div class="t" style="left:9.2px;top:82.1px;">ABC analysis</div>
<div class="t" style="left:168.7px;top:82.1px;">Management documents &gt; ABC analysis</div>
<svg style="left:336.2px;top:80.7px" width="5.4" height="7.9" viewBox="0 0 5.4 7.9"><rect x="0.3" y="1.9" width="4.1" height="4.1" fill="#e5261d"/></svg>
<div class="t" style="left:342.5px;top:82.1px;">New</div>
<div class="t" style="right:110.1px;top:82.1px;text-align:right;">$0.00</div>
<div class="t" style="left:489.6px;top:82.1px;">File</div>
<div class="t" style="left:1.9px;top:4.1px;">Title</div>
<div class="t" style="left:169px;top:4.1px;">Attached to</div>
<div class="t" style="left:336.2px;top:4.1px;">Status</div>
<div class="t" style="right:110.3px;top:4.1px;text-align:right;">Planned<br>Base Costs</div>
<div class="t" style="left:490.2px;top:4.1px;">Type</div>
<svg style="left:524.7px;top:8.6px" width="5.4" height="3.9" viewBox="0 0 5.4 3.9"><path d="M0 0H5.4L2.7 3.9Z" fill="#111"/></svg>
</div>
<svg style="left:604px;top:40px" width="164" height="152" viewBox="604 40 164 152"><defs><clipPath id="cs"><rect x="608.2" y="44.9" width="153.3" height="19.4" rx="2.3"/></clipPath></defs><g clip-path="url(#cs)"><rect x="608" y="44" width="154" height="21" fill="#6a6566"/><rect x="608" y="44" width="38.9" height="21" fill="#1f63d8"/></g><rect x="622.6" y="50.2" width="9.4" height="9.4" rx="0.6" fill="#fff"/><path d="M624.6 54.9L626.6 57.3L630.4 52.3" fill="none" stroke="#1f63d8" stroke-width="1.1"/><path d="M662.2 50.4H667.6M662.2 52.6H666.4M661.4 54.8H664.6M661.4 57H664M661.4 59.2H664.6" stroke="#fff" stroke-width="0.9"/><circle cx="668.6" cy="57" r="2.9" fill="#fff"/><path d="M700.9 51.4H705.2M700.9 54.9H705.2M700.9 58.4H705.2" stroke="#fff" stroke-width="1.8" stroke-linecap="round"/><path d="M708.2 51.4H709M708.2 54.9H709M708.2 58.4H709" stroke="#fff" stroke-width="1.8" stroke-linecap="round"/><rect x="739.6" y="50.2" width="9.3" height="9.4" rx="0.6" fill="#fff"/><path d="M741.7 57.7L747 51.9" stroke="#3f3a3b" stroke-width="1.5" stroke-linecap="round"/><path d="M740.8 58.6L741.3 56.8L742.6 58.1Z" fill="#3f3a3b"/><path d="M610.8 72.9L614.8 75.4L610.8 77.9Z" fill="#f1eff0"/><rect x="662.4" y="71.1" width="99.2" height="8.3" fill="#342c2f" stroke="#433c3e" stroke-width="0.5"/><rect x="662.4" y="90.8" width="99.2" height="7.9" rx="0.8" fill="#372f32" stroke="#483f42" stroke-width="0.5"/><rect x="612" y="84.7" width="149.6" height="0.7" fill="#3b3436"/><rect x="753.9" y="91.5" width="6.7" height="6.6" rx="1.5" fill="#2469e6"/><path d="M756.05 94.3L757.25 95.5L758.45 94.3" fill="none" stroke="#fff" stroke-width="0.8" stroke-linecap="round" stroke-linejoin="round"/><defs><clipPath id="cl"><rect x="617.5" y="118.5" width="144.2" height="70.3" rx="2"/></clipPath></defs><g clip-path="url(#cl)"><rect x="617" y="118" width="146" height="11.4" fill="#3f393b"/><rect x="617" y="129.3" width="146" height="0.6" fill="#4d4749"/><rect x="626.6" y="119" width="0.6" height="10" fill="#2e2729"/><rect x="617" y="177.2" width="146" height="0.6" fill="#4a4446"/></g><rect x="617.5" y="118.5" width="144.2" height="70.3" rx="2" fill="none" stroke="#4a4446" stroke-width="0.6"/><rect x="619.55" y="131.7" width="6" height="6" rx="1.2" fill="#2d2627" stroke="#8f8a8c" stroke-width="0.7"/><rect x="619.55" y="141.27" width="6" height="6" rx="1.2" fill="#2d2627" stroke="#8f8a8c" stroke-width="0.7"/><rect x="619.55" y="150.84" width="6" height="6" rx="1.2" fill="#2d2627" stroke="#8f8a8c" stroke-width="0.7"/><rect x="619.55" y="160.41" width="6" height="6" rx="1.2" fill="#2d2627" stroke="#8f8a8c" stroke-width="0.7"/><rect x="619.55" y="169.98" width="6" height="6" rx="1.2" fill="#2d2627" stroke="#8f8a8c" stroke-width="0.7"/><path d="M622.9 183.4H629.7M626.3 180V186.8" stroke="#f1eff0" stroke-width="0.8"/><path d="M641.2 183.4H647.7" stroke="#6d6769" stroke-width="0.8"/><circle cx="747.4" cy="183.2" r="3.3" fill="none" stroke="#d9d6d7" stroke-width="0.6"/><path d="M745.3 183.2H749.5" stroke="#d9d6d7" stroke-width="0.9"/><path d="M753.3 182.4L754.6 183.8L755.9 182.4" fill="none" stroke="#d9d6d7" stroke-width="0.6"/></svg><div class="t" style="left:655.6px;top:34.1px;font-size:6.3px;line-height:8px;color:#f1eff0;-webkit-text-stroke:0.15px;color:#8f8a8c;">Checklist: <span style="color:#f4f2f3;font-weight:bold;">Info</span></div><div class="t" style="left:666.9px;top:54.2px;font-size:4.4px;line-height:5.6px;font-weight:bold;color:#5a5556;">$</div><div class="t" style="left:619px;top:72.1px;font-size:6.3px;line-height:8px;color:#f1eff0;-webkit-text-stroke:0.15px;font-weight:bold;">Title</div><div class="t" style="left:663.6px;top:72.1px;font-size:6.3px;line-height:8px;color:#f1eff0;-webkit-text-stroke:0.15px;">Requirements on employee</div><div class="t" style="left:619px;top:92.1px;font-size:6.3px;line-height:8px;color:#f1eff0;-webkit-text-stroke:0.15px;">Creation Date</div><div class="t" style="left:663.9px;top:92.1px;font-size:6.3px;line-height:8px;color:#f1eff0;-webkit-text-stroke:0.15px;">July 2, 2005 at 10:34 AM</div><div class="t" style="left:619px;top:106.1px;font-size:6.3px;line-height:8px;color:#f1eff0;-webkit-text-stroke:0.15px;">Status</div><div class="t" style="left:661.9px;top:106.1px;font-size:6.3px;line-height:8px;color:#f1eff0;-webkit-text-stroke:0.15px;">Planned</div><div class="t" style="left:631.9px;top:121.1px;font-size:6.3px;line-height:8px;color:#f1eff0;-webkit-text-stroke:0.15px;">Title</div><div class="t" style="left:631px;top:132.1px;font-size:6.3px;line-height:8px;color:#f1eff0;-webkit-text-stroke:0.15px;">Dependable</div><div class="t" style="left:631px;top:141.1px;font-size:6.3px;line-height:8px;color:#f1eff0;-webkit-text-stroke:0.15px;">Team player</div><div class="t" style="left:631px;top:151.1px;font-size:6.3px;line-height:8px;color:#f1eff0;-webkit-text-stroke:0.15px;">Experience in min. 5 function blocks</div><div class="t" style="left:631px;top:160.1px;font-size:6.3px;line-height:8px;color:#f1eff0;-webkit-text-stroke:0.15px;">Basic knowledge of project management</div><div class="t" style="left:631px;top:170.1px;font-size:6.3px;line-height:8px;color:#f1eff0;-webkit-text-stroke:0.15px;">additional project-specific points<span style="letter-spacing:0.6px">...</span></div>
</div></body></html>
